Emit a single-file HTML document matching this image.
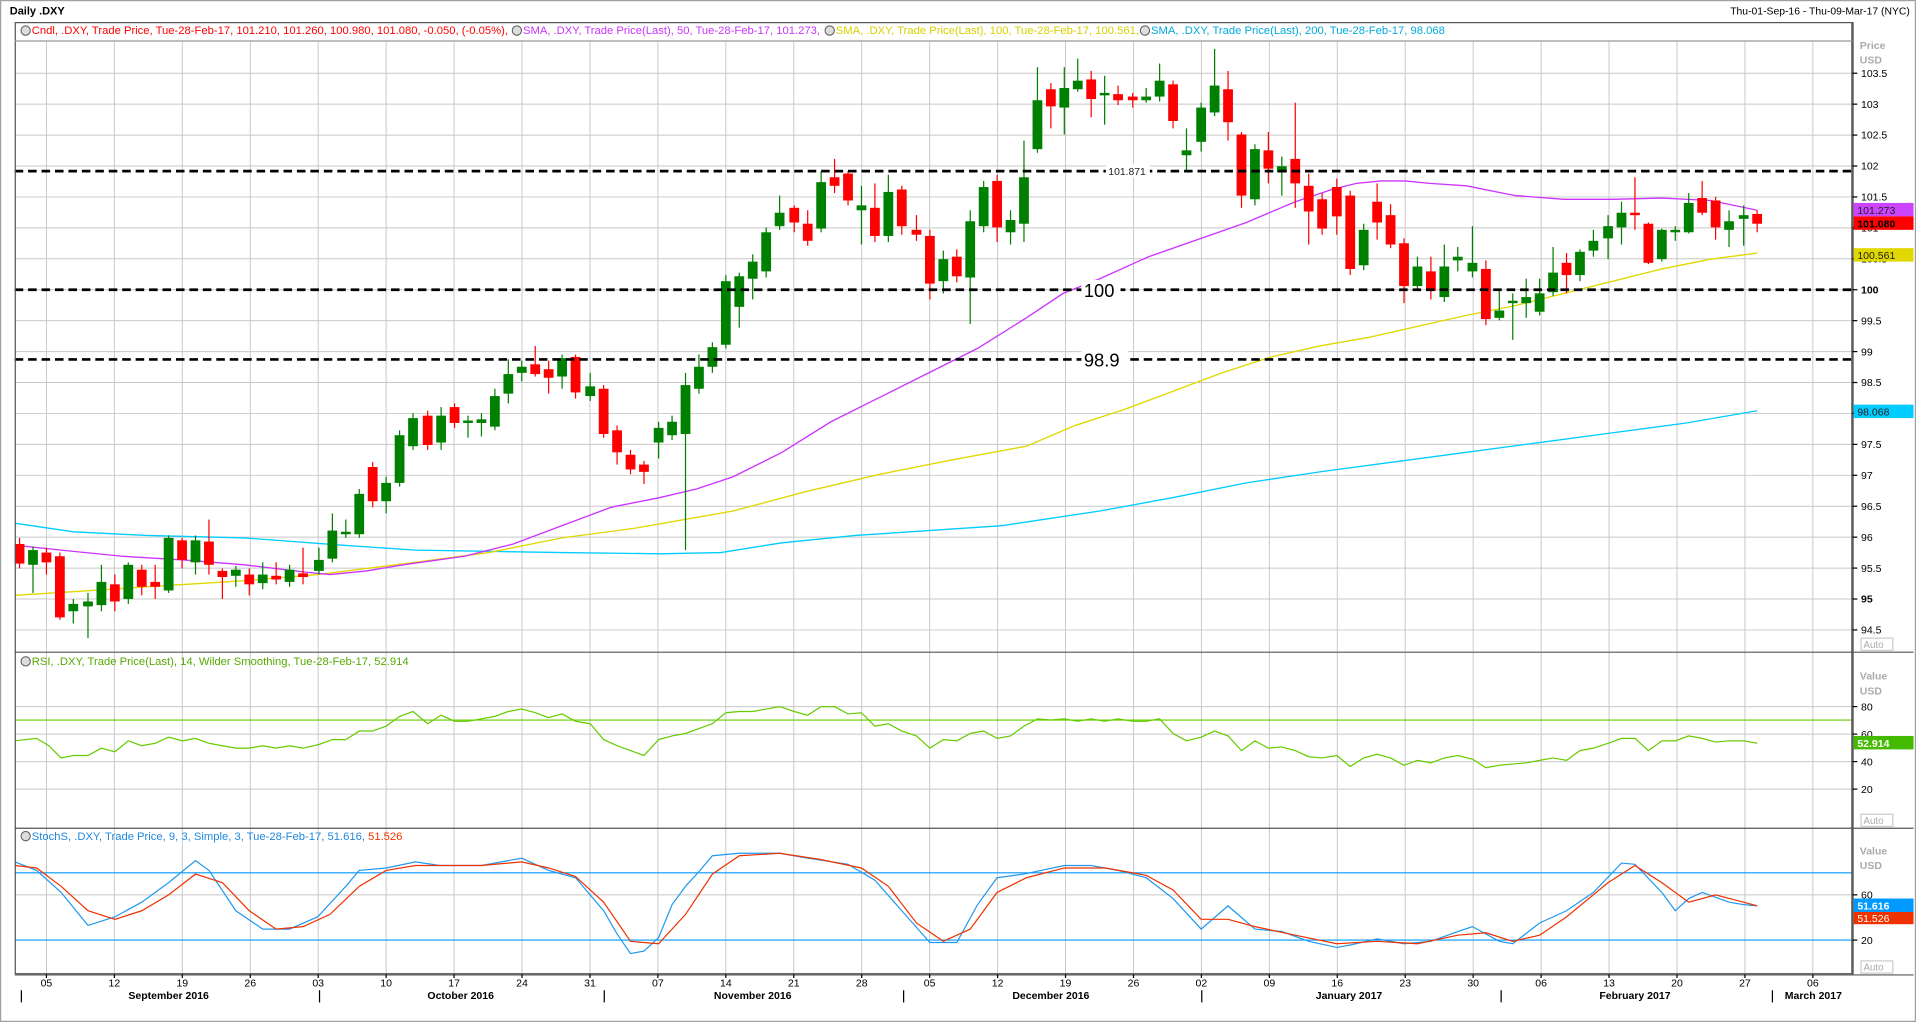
<!DOCTYPE html>
<html><head><meta charset="utf-8"><style>
html,body{margin:0;padding:0;background:#fff;width:1916px;height:1022px;overflow:hidden}
svg{display:block}
text{font-family:"Liberation Sans",sans-serif}
</style></head><body>
<svg id="s" width="1916" height="1022" viewBox="0 0 1568 836" preserveAspectRatio="none" xmlns="http://www.w3.org/2000/svg">
<rect x="0" y="0" width="1568" height="836" fill="#fff"/>
<rect x="0.5" y="0.5" width="1567" height="835" fill="none" stroke="#a0a0a0"/>
<text x="8" y="12" font-size="9" font-weight="bold" fill="#000">Daily .DXY</text>
<text x="1563" y="12" font-size="8.5" fill="#000" text-anchor="end">Thu-01-Sep-16 - Thu-09-Mar-17 (NYC)</text>
<g id="grid"></g>
<g id="ma"></g>
<g id="cd"></g>
<g stroke="#000" stroke-width="2.2" stroke-dasharray="7,4">
<line x1="12" y1="140" x2="1516" y2="140"/>
<line x1="12" y1="237" x2="1516" y2="237"/>
<line x1="12" y1="294" x2="1516" y2="294"/>
</g>
<rect x="905" y="134" width="36" height="11" fill="#fff"/>
<text x="907" y="143" font-size="8.5" fill="#222">101.871</text>
<rect x="885" y="229" width="32" height="16" fill="#fff"/>
<text x="887" y="243" font-size="15" fill="#000">100</text>
<rect x="885" y="286" width="38" height="16" fill="#fff"/>
<text x="887" y="300" font-size="15" fill="#000">98.9</text>
<g fill="none" stroke="#555" stroke-width="1">
<rect x="12.5" y="18.5" width="1503" height="778"/>
<line x1="12" y1="533.5" x2="1566" y2="533.5"/>
<line x1="12" y1="677.5" x2="1566" y2="677.5"/>
<line x1="1516.5" y1="18" x2="1516.5" y2="797"/>
<line x1="12" y1="797.5" x2="1566" y2="797.5"/>
</g>
<line x1="12" y1="33.5" x2="1516" y2="33.5" stroke="#999"/>
<text y="28" font-size="9.2">
<tspan x="26" fill="#ff0000">Cndl, .DXY, Trade Price, Tue-28-Feb-17, 101.210, 101.260, 100.980, 101.080, -0.050, (-0.05%),</tspan><tspan x="428" fill="#cc33ff">SMA, .DXY, Trade Price(Last),  50, Tue-28-Feb-17, 101.273,</tspan><tspan x="684" fill="#d8d000">SMA, .DXY, Trade Price(Last),  100, Tue-28-Feb-17, 100.561,</tspan><tspan x="942" fill="#00aadd">SMA, .DXY, Trade Price(Last),  200, Tue-28-Feb-17, 98.068</tspan>
</text>
<g fill="#ddd" stroke="#555" stroke-width="0.8">
<circle cx="21" cy="25" r="3.8"/><circle cx="423" cy="25" r="3.8"/><circle cx="679" cy="25" r="3.8"/><circle cx="937" cy="25" r="3.8"/>
<circle cx="21" cy="541" r="3.8"/><circle cx="21" cy="684" r="3.8"/>
</g>
<text x="26" y="544" font-size="9.2" fill="#55aa00">RSI, .DXY, Trade Price(Last),  14, Wilder Smoothing,  Tue-28-Feb-17, 52.914</text>
<text x="26" y="687" font-size="9.2" fill="#2288dd">StochS, .DXY, Trade Price,  9,  3, Simple,  3, Tue-28-Feb-17, 51.616, <tspan fill="#ee3300">51.526</tspan></text>
<g font-size="8.6" fill="#aaa" font-weight="bold">
<text x="1522" y="40">Price</text><text x="1522" y="52">USD</text>
<text x="1522" y="556">Value</text><text x="1522" y="568">USD</text>
<text x="1522" y="699">Value</text><text x="1522" y="711">USD</text>
</g>
<g id="axis" font-size="8.6" fill="#000"></g>
<g font-size="8.6">
<rect x="1517" y="166" width="49" height="11" fill="#cc44ff"/><text x="1520" y="175" fill="#222">101.273</text>
<rect x="1517" y="177" width="49" height="11" fill="#ff0000"/><text x="1520" y="186" fill="#000" font-weight="bold">101.080</text>
<rect x="1517" y="203" width="49" height="11" fill="#e0d800"/><text x="1520" y="212" fill="#222">100.561</text>
<rect x="1517" y="331" width="49" height="11" fill="#00ccff"/><text x="1520" y="340" fill="#222">98.068</text>
<rect x="1517" y="602" width="49" height="11" fill="#44bb00"/><text x="1520" y="611" fill="#fff" font-weight="bold">52.914</text>
<rect x="1517" y="735" width="49" height="11" fill="#0099ff"/><text x="1520" y="744" fill="#fff" font-weight="bold">51.616</text>
<rect x="1517" y="746" width="49" height="10" fill="#ee3300"/><text x="1520" y="754" fill="#fff">51.526</text>
</g>
<g font-size="8" fill="#aaa">
<rect x="1523" y="522" width="26" height="10" fill="#fff" stroke="#ccc"/><text x="1525" y="530">Auto</text>
<rect x="1523" y="666" width="26" height="10" fill="#fff" stroke="#ccc"/><text x="1525" y="674">Auto</text>
<rect x="1523" y="786" width="26" height="10" fill="#fff" stroke="#ccc"/><text x="1525" y="794">Auto</text>
</g>
<g id="dates" font-size="8.6" fill="#000" text-anchor="middle"></g>
<g font-size="8.6" font-weight="bold" text-anchor="middle" fill="#000">
<text x="138" y="817">September 2016</text>
<text x="377" y="817">October 2016</text>
<text x="616" y="817">November 2016</text>
<text x="860" y="817">December 2016</text>
<text x="1104" y="817">January 2017</text>
<text x="1338" y="817">February 2017</text>
<text x="1484" y="817">March 2017</text>
</g>
<g stroke="#000">
<line x1="17.5" y1="810" x2="17.5" y2="820"/><line x1="261.5" y1="810" x2="261.5" y2="820"/><line x1="494.5" y1="810" x2="494.5" y2="820"/><line x1="739.5" y1="810" x2="739.5" y2="820"/><line x1="983.5" y1="810" x2="983.5" y2="820"/><line x1="1228.5" y1="810" x2="1228.5" y2="820"/><line x1="1450.5" y1="810" x2="1450.5" y2="820"/>
</g>
</svg>
<script>
var NS="http://www.w3.org/2000/svg",s=document.getElementById('s');
function el(p,t,a){var e=document.createElementNS(NS,t);for(var k in a)e.setAttribute(k,a[k]);p.appendChild(e);return e;}
var g=document.getElementById('grid');
for(var k=0;k<27;k++){var x=38+55.6*k;if(x>1512)break;
 el(g,'line',{x1:x,y1:34,x2:x,y2:797,stroke:'#c8c8c8','stroke-width':0.8});}
for(var p=94.5;p<=103.51;p+=0.5){var y=237-(p-100)*50.6;el(g,'line',{x1:12,y1:y,x2:1516,y2:y,stroke:'#c8c8c8','stroke-width':0.8});}
[578,600.5,623,645.5].forEach(function(y){el(g,'line',{x1:12,y1:y,x2:1516,y2:y,stroke:'#c8c8c8','stroke-width':0.8});});
el(g,'line',{x1:12,y1:589,x2:1516,y2:589,stroke:'#66cc00','stroke-width':0.9});
el(g,'line',{x1:12,y1:732,x2:1516,y2:732,stroke:'#c8c8c8','stroke-width':0.8});
el(g,'line',{x1:12,y1:714,x2:1516,y2:714,stroke:'#0099ff','stroke-width':0.9});
el(g,'line',{x1:12,y1:769,x2:1516,y2:769,stroke:'#0099ff','stroke-width':0.9});
var ax=document.getElementById('axis');
[103.5,103,102.5,102,101.5,101,100.5,100,99.5,99,98.5,98,97.5,97,96.5,96,95.5,95,94.5].forEach(function(p){var y=237-(p-100)*50.6;
 el(ax,'line',{x1:1516,y1:y,x2:1520,y2:y,stroke:'#000'});
 var t=el(ax,'text',{x:1523,y:y+3});t.textContent=String(p);if(p==100||p==95)t.setAttribute('font-weight','bold');});
[[80,578],[60,600.5],[40,623],[20,645.5]].forEach(function(a){el(ax,'line',{x1:1516,y1:a[1],x2:1520,y2:a[1],stroke:'#000'});var t=el(ax,'text',{x:1523,y:a[1]+3});t.textContent=a[0];});
[[60,732],[20,769]].forEach(function(a){el(ax,'line',{x1:1516,y1:a[1],x2:1520,y2:a[1],stroke:'#000'});var t=el(ax,'text',{x:1523,y:a[1]+3});t.textContent=a[0];});
var dl=['05','12','19','26','03','10','17','24','31','07','14','21','28','05','12','19','26','02','09','16','23','30','06','13','20','27','06'];
var dg=document.getElementById('dates');
dl.forEach(function(d,i){var x=38+55.6*i;el(dg,'line',{x1:x,y1:797,x2:x,y2:800,stroke:'#000'});var t=el(dg,'text',{x:x,y:807});t.textContent=d;});
var ma=document.getElementById('ma');
function pl(pts,c,w,par){el(par||ma,'polyline',{points:pts.map(function(p){return p.join(',')}).join(' '),fill:'none',stroke:c,'stroke-width':w||1});}
pl([[12,428],[60,435],[120,438],[200,440],[280,446],[340,450],[400,451],[460,452],[540,453],[590,452],[640,444],[700,438],[760,434],[820,430],[860,424],[900,418],[960,407],[1020,395],[1080,386],[1140,378],[1200,370],[1260,362],[1320,354],[1380,346],[1438,336]],'#00ccff',1.1);
pl([[12,487],[60,484],[120,480],[200,475],[260,470],[300,465],[340,460],[400,452],[460,440],[520,432],[560,425],[600,418],[660,402],[720,388],[780,376],[840,365],[880,348],[920,335],[960,320],[1000,305],[1040,292],[1080,283],[1120,276],[1160,267],[1200,258],[1240,250],[1280,240],[1320,230],[1360,220],[1400,212],[1438,207]],'#e0d800',1.1);
pl([[12,446],[50,450],[100,455],[150,458],[200,462],[250,468],[270,470],[300,467],[330,462],[380,455],[420,445],[460,430],[500,415],[540,407],[570,400],[600,390],[640,370],[680,345],[720,325],[760,305],[800,285],[840,260],[870,240],[900,228],[940,210],[980,196],[1020,182],[1060,165],[1090,155],[1110,150],[1130,148],[1150,148],[1170,150],[1200,152],[1240,160],[1280,163],[1320,163],[1360,162],[1400,164],[1438,172]],'#cc33ff',1.1);
var rsi=[[12,606],[30,604],[40,610],[50,620],[60,618],[72,618],[83,612],[94,615],[105,606],[116,610],[127,608],[138,603],[149,606],[160,604],[171,608],[182,610],[193,612],[204,612],[215,610],[226,612],[237,610],[248,612],[261,609],[272,605],[283,605],[294,598],[305,598],[316,594],[327,586],[338,582],[350,592],[361,585],[372,590],[383,590],[394,588],[405,586],[416,582],[427,580],[438,583],[449,587],[460,584],[471,590],[483,592],[494,605],[505,610],[516,614],[527,618],[539,605],[550,602],[561,600],[572,596],[583,592],[594,583],[605,582],[616,582],[627,580],[638,578],[650,582],[661,585],[672,578],[683,578],[694,584],[705,583],[716,594],[727,592],[738,598],[750,602],[761,612],[772,605],[783,606],[794,600],[805,598],[816,604],[827,602],[838,594],[849,588],[860,589],[871,588],[882,590],[893,588],[904,590],[915,588],[927,590],[938,590],[949,588],[960,600],[971,606],[983,603],[994,598],[1005,602],[1016,614],[1027,606],[1038,612],[1049,611],[1060,614],[1071,619],[1082,620],[1094,618],[1105,627],[1116,620],[1127,617],[1138,620],[1149,626],[1160,622],[1171,624],[1182,620],[1193,618],[1205,621],[1216,628],[1227,626],[1238,625],[1249,624],[1260,622],[1271,620],[1282,622],[1293,614],[1304,612],[1316,608],[1327,604],[1338,604],[1349,614],[1360,606],[1371,606],[1382,602],[1393,604],[1404,607],[1415,606],[1427,606],[1438,608]];
pl(rsi,'#66cc00',1);
pl([[12,705],[30,712],[50,730],[72,757],[94,750],[116,738],[138,722],[160,704],[171,712],[193,745],[215,760],[237,760],[260,750],[283,725],[294,712],[316,710],[340,705],[360,708],[394,708],[427,702],[449,712],[471,718],[494,745],[505,764],[516,780],[527,778],[539,767],[550,740],[561,725],[572,713],[583,700],[605,698],[638,698],[661,702],[694,707],[716,720],[738,745],[761,771],[783,771],[800,740],[816,718],[838,715],[871,708],[893,708],[915,712],[938,718],[960,735],[983,760],[1005,741],[1027,760],[1049,762],[1071,770],[1094,775],[1105,773],[1127,768],[1149,772],[1171,770],[1193,762],[1205,758],[1227,770],[1238,772],[1260,755],[1282,745],[1304,730],[1327,706],[1338,707],[1360,730],[1371,745],[1382,735],[1393,730],[1415,738],[1427,740],[1438,741]],'#2299ee',1);
pl([[12,708],[30,710],[50,725],[72,745],[94,752],[116,745],[138,732],[160,715],[182,722],[204,745],[226,760],[248,758],[270,748],[294,725],[316,712],[340,708],[394,708],[427,705],[449,710],[471,717],[494,738],[516,770],[539,772],[561,748],[583,715],[605,700],[638,698],[671,703],[705,710],[727,725],[750,755],[772,770],[794,760],[816,730],[840,718],[871,710],[905,710],[938,716],[960,728],[983,752],[1005,752],[1027,758],[1060,765],[1094,772],[1127,770],[1160,772],[1193,765],[1216,763],[1238,770],[1260,765],[1282,750],[1316,722],[1338,708],[1360,722],[1382,738],[1404,732],[1427,738],[1438,741]],'#ee3300',1);
var C=[[16,445,461,440,465],[27,462,450,447,485],[38,452,460,448,470],[49,455,505,452,507],[60,500,494,490,510],[72,496,492,485,522],[83,495,476,462,500],[94,478,492,470,500],[105,490,462,460,494],[116,466,480,462,487],[127,476,480,462,490],[138,483,440,438,485],[149,442,458,440,465],[160,460,442,438,470],[171,443,462,425,470],[182,467,472,465,490],[193,471,466,463,480],[204,470,478,465,487],[215,477,470,460,482],[226,471,474,460,478],[237,476,466,462,480],[248,469,472,448,478],
[261,467,458,448,470],[272,457,434,420,460],[283,437,435,425,440],[294,437,404,400,440],[305,382,410,378,415],[316,410,395,390,420],[327,395,356,352,398],[338,365,342,338,368],[350,340,364,336,368],[361,362,340,333,368],[372,333,346,330,350],[383,346,344,340,358],[394,346,343,338,357],[405,349,324,318,352],[416,322,306,294,330],[427,305,300,295,312],[438,298,306,283,308],[449,302,309,295,322],[460,308,293,290,318],[471,292,321,290,326],[483,324,316,305,328],[494,318,355,315,358],[505,352,370,348,380],[516,372,384,368,388],[527,380,386,377,396],
[539,362,350,345,375],[550,356,345,340,360],[561,355,315,305,450],[572,318,300,290,322],[583,300,284,280,305],[594,282,230,225,285],[605,251,226,223,268],[616,228,214,208,245],[627,222,190,186,227],[638,185,174,160,188],[650,170,182,168,190],[661,183,197,172,201],[672,187,149,140,190],[683,145,152,130,158],[694,142,164,140,168],[705,172,168,152,200],[716,170,193,150,198],[727,193,157,143,198],[738,155,185,152,192],
[750,188,192,176,197],[761,193,232,188,245],[772,230,212,205,240],[783,210,226,204,231],[794,227,181,172,265],[805,185,153,148,190],[816,148,186,143,198],[827,190,180,172,200],[838,183,145,115,198],[849,122,82,55,125],[860,73,87,68,105],[871,88,72,55,110],[882,73,66,48,75],[893,65,81,58,96],[904,78,76,62,102],[915,77,82,70,86],[927,80,81,76,88],[938,82,79,72,84],[949,79,66,52,83],[960,69,99,66,105],
[971,127,123,105,140],[983,116,88,84,124],[994,92,70,40,95],[1005,73,100,58,115],[1016,110,160,108,170],[1027,163,122,118,168],[1038,123,138,108,150],[1049,141,136,128,160],[1060,130,150,84,170],[1071,152,173,142,200],[1082,163,187,158,192],[1094,153,177,146,192],[1105,160,220,156,225],[1116,217,188,183,221],[1127,165,182,150,196],[1138,176,200,167,203],[1149,199,234,195,248],[1160,234,218,210,237],[1171,222,238,210,245],[1182,243,218,200,247],[1193,213,210,202,222],[1205,222,215,185,227],
[1216,220,261,213,266],[1227,260,254,237,262],[1238,248,246,240,278],[1249,248,243,228,260],[1260,255,240,228,258],[1271,239,223,202,242],[1282,215,225,207,240],[1293,225,206,204,230],[1304,205,197,188,210],[1316,195,185,176,212],[1327,186,174,165,200],[1338,174,176,145,188],[1349,183,215,182,216],[1360,212,188,187,214],[1371,190,188,185,197],[1382,190,166,158,191],[1393,162,174,148,176],[1404,164,186,161,196],[1415,188,181,172,202],[1427,178,177,168,201],[1438,175,183,172,190]];
var cd=document.getElementById('cd');
C.forEach(function(c){var x=c[0],o=c[1],cl=c[2],h=c[3],l=c[4];var col=cl<o?'#008000':'#ff0000';
 el(cd,'line',{x1:x,y1:h,x2:x,y2:l,stroke:col,'stroke-width':1});
 var t=Math.min(o,cl),b=Math.max(o,cl);if(b-t<2){t-=1;b+=1;}
 el(cd,'rect',{x:x-4,y:t,width:8,height:b-t,fill:col});});
</script>
</body></html>
